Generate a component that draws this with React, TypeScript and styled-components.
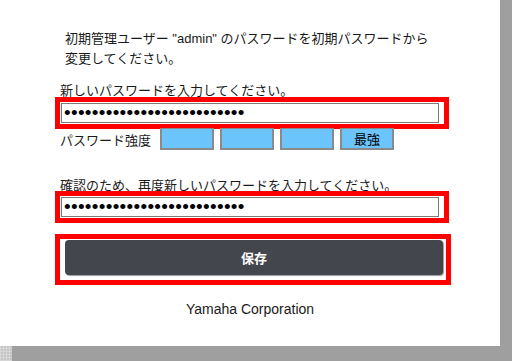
import React from "react";
import styled, { createGlobalStyle } from "styled-components";

const GlobalStyle = createGlobalStyle`
  html, body {
    margin: 0;
    padding: 0;
    background: #9f9f9f;
  }
  body {
    font-family: "Liberation Sans", "Noto Sans CJK JP", sans-serif;
    color: #1a1a1a;
    width: 512px;
    height: 361px;
    overflow: hidden;
  }
`;

const PASSWORD = "yamahaadmin2024rtxsecure!!";

const App = () => {
  return (
    <>
      <GlobalStyle />
      <Frame>
        <TopRow>
          <Panel>
            <Intro>
              初期管理ユーザー "admin" のパスワードを初期パスワードから
              <br />
              変更してください。
            </Intro>
            <FieldLabel $gap={14}>新しいパスワードを入力してください。</FieldLabel>
            <Highlight $pad="1px 5px 1px 1px" $top={-2}>
              <PasswordInput type="password" defaultValue={PASSWORD} readOnly />
            </Highlight>
            <StrengthRow>
              <StrengthLabel>パスワード強度</StrengthLabel>
              <StrengthBox />
              <StrengthBox />
              <StrengthBox />
              <StrengthBox>最強</StrengthBox>
            </StrengthRow>
            <FieldLabel $gap={28}>
              確認のため、再度新しいパスワードを入力してください。
            </FieldLabel>
            <Highlight $pad="1px 5px 1px 1px" $top={-3}>
              <PasswordInput type="password" defaultValue={PASSWORD} readOnly />
            </Highlight>
            <Highlight $pad="1px 3px 5px 5px" $top={11}>
              <SaveButton type="button">保存</SaveButton>
            </Highlight>
            <Footer>Yamaha Corporation</Footer>
          </Panel>
          <SideStrip />
        </TopRow>
        <BottomRow>
          <Checker />
        </BottomRow>
      </Frame>
    </>
  );
};

export default App;

const Frame = styled.div`
  display: flex;
  flex-direction: column;
  width: 512px;
  height: 361px;
`;

const TopRow = styled.div`
  display: flex;
  height: 346px;
`;

const Panel = styled.div`
  display: flex;
  flex-direction: column;
  align-items: flex-start;
  width: 500px;
  height: 346px;
  background: #ffffff;
  padding-left: 55px;
  box-sizing: border-box;
`;

const SideStrip = styled.div`
  flex: 1;
  background: #9f9f9f;
`;

const BottomRow = styled.div`
  display: flex;
  flex: 1;
  background: #9f9f9f;
`;

const Checker = styled.div`
  width: 12px;
  height: 100%;
  background-color: #c4c4c4;
  background-image: linear-gradient(90deg, #d6d6d6 1px, transparent 1px),
    linear-gradient(0deg, #d6d6d6 1px, transparent 1px);
  background-size: 3px 3px;
`;

const Intro = styled.p`
  margin: 29px 0 0 10px;
  font-size: 13px;
  line-height: 20px;
`;

const FieldLabel = styled.div<{ $gap: number }>`
  margin-top: ${(p) => p.$gap}px;
  margin-left: 5px;
  font-size: 13px;
  line-height: 16px;
  height: 16px;
  white-space: nowrap;
`;

const Highlight = styled.div<{ $pad: string; $top: number }>`
  display: flex;
  margin-top: ${(p) => p.$top}px;
  padding: ${(p) => p.$pad};
  border: 5px solid #ff0000;
`;

const PasswordInput = styled.input`
  width: 378px;
  height: 20px;
  box-sizing: border-box;
  margin: 0;
  padding: 0 2px;
  border: 1px solid #7a7a7a;
  background: #ffffff;
  font-family: "Liberation Sans", sans-serif;
  font-size: 19px;
  letter-spacing: 0.3px;
  color: #000000;
  outline: none;
`;

const StrengthRow = styled.div`
  display: flex;
  align-items: center;
  gap: 6px;
  margin-top: -1px;
  margin-left: 5px;
  height: 22px;
`;

const StrengthLabel = styled.div`
  width: 94px;
  font-size: 13px;
  line-height: 16px;
  margin-top: 3px;
`;

const StrengthBox = styled.div`
  display: flex;
  align-items: center;
  justify-content: center;
  width: 54px;
  height: 22px;
  box-sizing: border-box;
  border: 2px solid #8a8a8a;
  border-top-width: 1px;
  background: #6cc4fc;
  font-size: 13px;
  color: #000000;
`;

const SaveButton = styled.button`
  width: 378px;
  height: 35px;
  border: none;
  border-radius: 4px;
  background: #44464e;
  box-shadow: 1px 1px 1px #9a9a9a;
  color: #ffffff;
  font-family: "Liberation Sans", "Noto Sans CJK JP", sans-serif;
  font-size: 13px;
  font-weight: 700;
  cursor: pointer;
`;

const Footer = styled.div`
  align-self: stretch;
  margin: 16px 0 0 -55px;
  font-size: 14px;
  line-height: 16px;
  text-align: center;
`;
